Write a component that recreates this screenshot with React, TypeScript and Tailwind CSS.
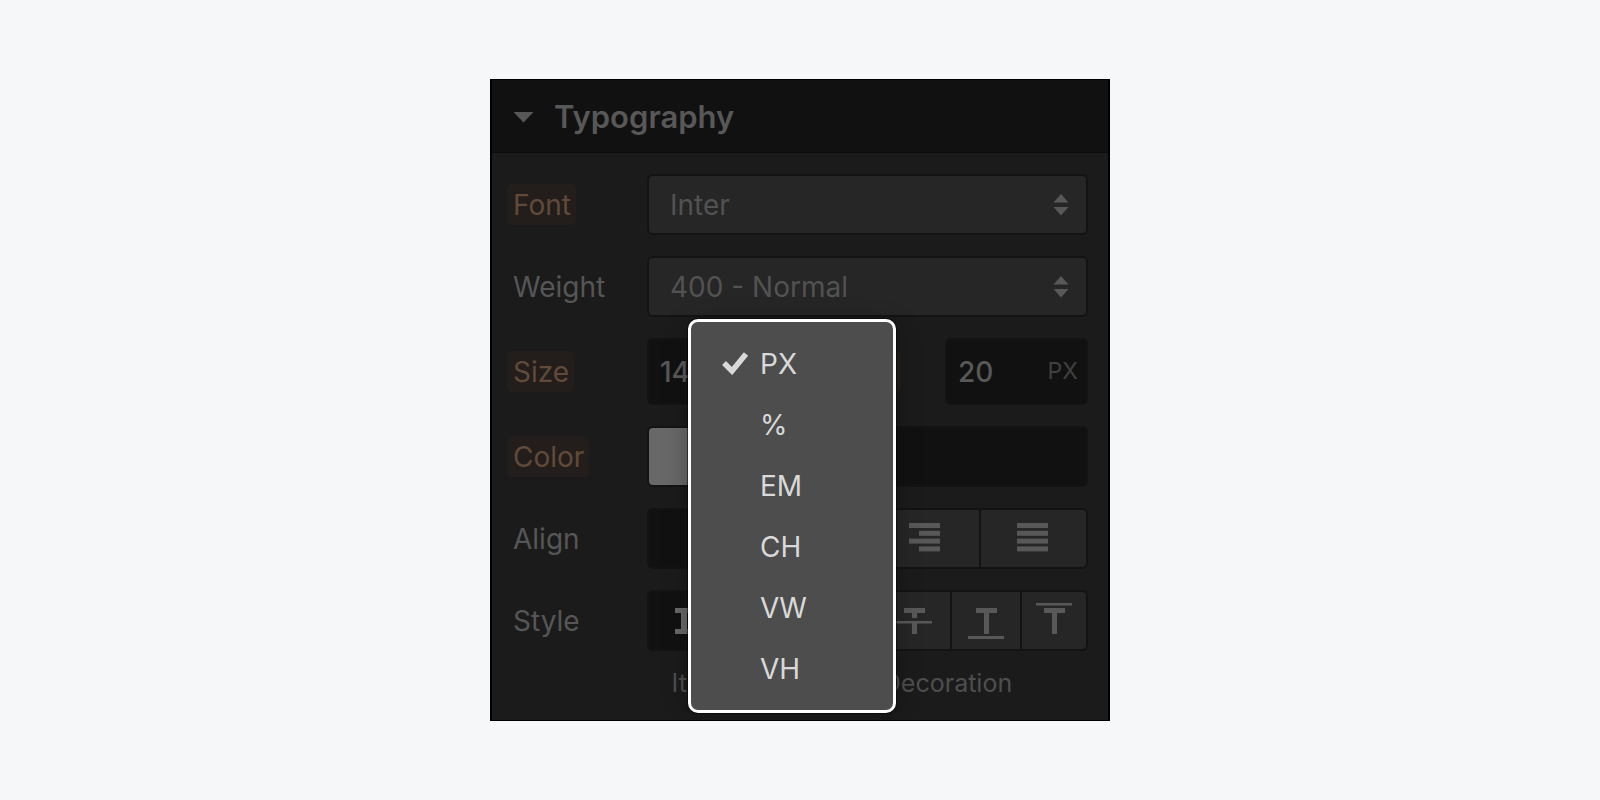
import React from "react";

const label = "pt-px text-[28px] leading-10";
const plain = `${label} text-[#565656]`;
const marked = `${label} -ml-[6px] rounded-[5px] bg-[#231e1b] pr-[5px] pl-[6px] text-[#614a39]`;
const shell = "rounded-md border-2 border-[#131313]";
const cell = "flex items-center justify-center bg-[#262626] text-[#585858]";
const activeCell = "flex items-center justify-center bg-[#111111] text-[#686868]";

function Row({ name, id, tagged, tall, children }: { name: string; id?: string; tagged?: boolean; tall?: boolean; children: React.ReactNode }) {
  return (
    <div className={`flex items-center ${tall ? "h-[67px]" : "h-[61px]"}`}>
      <div className="flex w-[134px] shrink-0">
        {id ? (
          <label htmlFor={id} className={tagged ? marked : plain}>{name}</label>
        ) : (
          <span className={plain}>{name}</span>
        )}
      </div>
      <div className="flex h-full min-w-0 flex-1">{children}</div>
    </div>
  );
}

function Picker({ id, value }: { id: string; value: string }) {
  return (
    <div className={`grid h-full w-full ${shell}`}>
      <select id={id} className="col-start-1 row-start-1 w-full appearance-none rounded-sm bg-[#262626] px-[21px] text-[28px] text-[#525252]">
        <option>{value}</option>
      </select>
      <svg className="pointer-events-none col-start-1 row-start-1 mr-[17px] self-center justify-self-end" width="16" height="22" viewBox="0 0 16 22" fill="#585858">
        <path d="M8 0l7.5 8.5H.5zM8 21.5l7.5-8.5H.5z" />
      </svg>
    </div>
  );
}

function AlignIcon({ rows }: { rows: [number, number][] }) {
  return (
    <svg width="33" height="32" viewBox="0 0 33 32" fill="currentColor">
      {rows.map(([x, w], i) => (
        <rect key={i} x={x} y={i * 7.8} width={w} height="5" />
      ))}
    </svg>
  );
}

function Letter({ kind }: { kind: string }) {
  const stem = "M8 6h21v5h-8v21h-5V11H8z";
  return (
    <svg width="36" height="38" viewBox="0 0 36 38" fill="currentColor">
      {kind === "none" && <path d="M10 11l3-3 6 6 6-6 3 3-6 6 6 6-3 3-6-6-6 6-3-3 6-6z" />}
      {kind === "strike" && <path d="M8 6h21v5h-8v5h-5v-5H8zM0 19h36v2.5H21V32h-5V21.5H0z" />}
      {kind === "under" && <path d={`${stem}M0 34h36v3H0z`} />}
      {kind === "over" && <path d={`${stem}M0 1h36v2.5H0z`} />}
      {kind === "roman" && <path d="M9 6h18v5h-6v16h6v5H9v-5h6V11H9z" />}
      {kind === "italic" && <path d="M13 6h16v5h-5l-5 16h5v5H8v-5h5l5-16h-5z" />}
    </svg>
  );
}

const units = ["PX", "%", "EM", "CH", "VW", "VH"];

export default function App() {
  return (
    <main className="flex min-h-screen items-center justify-center bg-[#f5f7f9] font-['Inter',sans-serif]">
      <section className="relative w-[620px] max-w-full overflow-hidden border-x-2 border-y border-black bg-[#1b1b1b]">
        <h2 className="h-[73px] border-b border-[#0c0c0c] bg-[#111111]">
          <button className="flex h-full w-full items-center gap-5 pt-[2px] pl-[21px] text-left text-[31px] font-semibold text-[#585858]">
            <svg width="21" height="12" viewBox="0 0 21 12" fill="currentColor">
              <path d="M.5 1h20l-10 10.5z" />
            </svg>
            Typography
          </button>
        </h2>

        <div className="flex flex-col gap-[21px] pt-[21px] pr-5 pl-[21px]">
          <Row name="Font" id="font" tagged>
            <Picker id="font" value="Inter" />
          </Row>
          <Row name="Weight" id="weight">
            <Picker id="weight" value="400 - Normal" />
          </Row>
          <Row name="Size" id="size" tagged tall>
            <div className={`flex w-[143px] items-center bg-[#111111] px-[11px] ${shell}`}>
              <input id="size" defaultValue="14" className="w-full min-w-0 bg-transparent text-[28px] font-medium text-[#585858]" />
            </div>
            <div className="flex flex-1 items-center justify-end pr-11">
              <label htmlFor="height" className={marked}>Height</label>
            </div>
            <div className={`flex w-[143px] items-center bg-[#111111] px-[11px] ${shell}`}>
              <input id="height" defaultValue="20" className="w-full min-w-0 bg-transparent text-[28px] font-medium text-[#585858]" />
              <button className="-mr-[3px] text-[23px] text-[#404040]">PX</button>
            </div>
          </Row>
          <Row name="Color" id="color" tagged>
            <div className={`flex w-full bg-[#111111] ${shell}`}>
              <button aria-label="Pick color" className="w-[60px] rounded-l-sm bg-[#686868]" />
              <input id="color" className="min-w-0 flex-1 bg-transparent px-3 text-[28px] text-[#585858]" />
            </div>
          </Row>
          <Row name="Align">
            <div className={`grid w-full grid-cols-[114px_1fr_107px_105px] gap-[2px] overflow-hidden bg-[#131313] ${shell}`}>
              <button aria-label="Left" className={activeCell}><AlignIcon rows={[[0, 31], [0, 21], [0, 31], [0, 21]]} /></button>
              <button aria-label="Center" className={cell}><AlignIcon rows={[[0, 31], [5, 21], [0, 31], [5, 21]]} /></button>
              <button aria-label="Right" className={cell}><AlignIcon rows={[[0, 31], [10, 21], [0, 31], [10, 21]]} /></button>
              <button aria-label="Justify" className={cell}><AlignIcon rows={[[0, 31], [0, 31], [0, 31], [0, 31]]} /></button>
            </div>
          </Row>
          <Row name="Style">
            <div className="flex w-full gap-[21px]">
              <div className={`grid w-[145px] grid-cols-2 gap-[2px] overflow-hidden bg-[#131313] ${shell}`}>
                <button aria-label="Regular" className={activeCell}><Letter kind="roman" /></button>
                <button aria-label="Italic" className={cell}><Letter kind="italic" /></button>
              </div>
              <div className={`grid flex-1 grid-cols-[1fr_72px_68px_64px] gap-[2px] overflow-hidden bg-[#131313] ${shell}`}>
                <button aria-label="No decoration" className={cell}><Letter kind="none" /></button>
                <button aria-label="Strikethrough" className={cell}><Letter kind="strike" /></button>
                <button aria-label="Underline" className={cell}><Letter kind="under" /></button>
                <button aria-label="Overline" className={cell}><Letter kind="over" /></button>
              </div>
            </div>
          </Row>
        </div>

        <div className="flex h-[69px] gap-[21px] pt-4 pr-[23px] pl-[152px] text-[25px] leading-[33px] text-[#4e4e4e]">
          <span className="w-[145px] text-center">Italicize</span>
          <span className="flex-1 text-center">Decoration</span>
        </div>

        <ul role="listbox" aria-label="Unit" className="absolute top-[239px] left-[196px] w-[208px] rounded-[10px] border-3 border-white bg-[#4d4d4d] pt-[11px] pb-[11px] text-[28px] text-[#d9d9d9] shadow-[0_0_0_1px_rgba(0,0,0,0.5),0_4px_24px_rgba(0,0,0,0.25)]">
          {units.map((unit, i) => (
            <li key={unit} role="option" aria-selected={i === 0} className="flex h-[61px] items-center">
              <span className="flex w-[69px] justify-end pr-[11px] pb-[2px]">
                {i === 0 && (
                  <svg width="28" height="24" viewBox="0 0 28 24" fill="none" stroke="currentColor" strokeWidth="5.5">
                    <path d="M3 12l8 8L25 3" />
                  </svg>
                )}
              </span>
              {unit}
            </li>
          ))}
        </ul>
      </section>
    </main>
  );
}
